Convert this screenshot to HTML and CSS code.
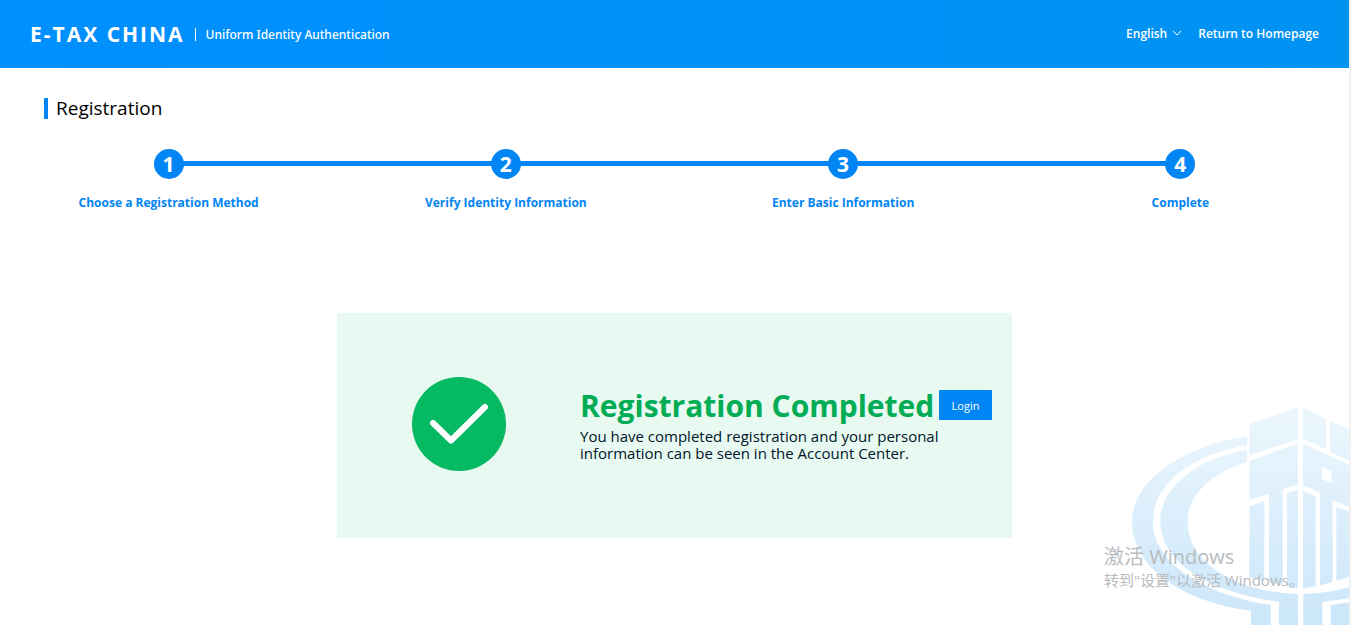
FILE: index.html
```html
<!DOCTYPE html>
<html lang="en">
<head>
<meta charset="utf-8">
<title>E-Tax China - Registration</title>
<link rel="stylesheet" href="styles.css">
</head>
<body>
<header class="header">
  <div class="brand">
    <span class="brand-name">E-TAX CHINA</span>
    <span class="brand-sub">Uniform Identity Authentication</span>
  </div>
  <nav class="nav">
    <button class="lang" type="button">English
      <svg class="chevron" viewBox="0 0 10 6" aria-hidden="true"><path d="M1 1l4 4 4-4"/></svg>
    </button>
    <a class="home" href="#">Return to Homepage</a>
  </nav>
</header>
<main class="main">
  <h1 class="title">Registration</h1>
  <ol class="steps">
    <li class="step"><span class="dot">1</span><span class="label">Choose a Registration Method</span></li>
    <li class="step"><span class="dot">2</span><span class="label">Verify Identity Information</span></li>
    <li class="step"><span class="dot">3</span><span class="label">Enter Basic Information</span></li>
    <li class="step"><span class="dot">4</span><span class="label">Complete</span></li>
  </ol>
  <section class="panel">
    <svg class="check" viewBox="0 0 94 94" aria-hidden="true"><circle cx="47" cy="47" r="47"/><path d="M21 46L39 63.500L73 30"/></svg>
    <div class="message">
      <div class="done-row">
        <h2 class="done">Registration Completed</h2>
        <button class="login" type="button">Login</button>
      </div>
      <p class="text">You have completed registration and your personal information can be seen in the Account Center.</p>
    </div>
  </section>
</main>
<svg class="emblem" viewBox="0 0 777 705" aria-hidden="true">
  <defs>
    <linearGradient id="sky" gradientUnits="userSpaceOnUse" x1="0" y1="50" x2="0" y2="705">
      <stop offset="0" stop-color="#edf7fd"/><stop offset="1" stop-color="#cbe6fa"/>
    </linearGradient>
  </defs>
  <g fill="url(#sky)">
    <path d="M471 138C270 172 126 274 126 395C126 530 275 635 483 662V705H542V645C335 613 189 515 189 395C189 282 300 196 471 165Z"/>
    <path d="M471 180C317 207 211 292 211 395C211 510 345 605 567 635V705H624V612C430 605 293 515 293 395C293 316 362 249 471 215Z"/>
    <path d="M640 612C690 611 735 604 777 592V625L697 636V705H640Z"/>
    <path d="M722 645L777 637V705H722Z"/>
    <path d="M478 102L624 52V147L478 196Z"/>
    <path d="M639 52L708 86V178L639 146Z"/>
    <path d="M720 92L777 116V212L720 185Z"/>
    <path d="M478 213L624 160V283L578 298V585L537 577V311L478 330Z"/>
    <path d="M478 349L523 332V573L478 561Z"/>
    <path d="M591 308L624 299V595L591 589Z"/>
    <path fill-rule="evenodd" d="M639 160L777 225V350L728 330V576L690 586V308L639 285ZM696 230V267L725 279V243Z"/>
    <path d="M639 302L677 318V588L639 596Z"/>
    <path d="M739 352L777 364V560L739 572Z"/>
  </g>
</svg>
<aside class="activate" lang="zh-CN">
  <p class="activate-title">激活 Windows</p>
  <p class="activate-text">转到"设置"以激活 Windows。</p>
</aside>
</body>
</html>
```
FILE: styles.css
```css
* { box-sizing: border-box; }

body {
  margin: 0;
  min-height: 100vh;
  position: relative;
  overflow-x: hidden;
  border-right: 2px solid #f1f1f1;
  background: #fff;
  color: #000;
  font-family: "Open Sans", "Noto Sans", sans-serif;
}

h1, h2, p, ol { margin: 0; padding: 0; }
button { font-family: inherit; cursor: pointer; }

.header {
  display: flex;
  align-items: center;
  justify-content: space-between;
  height: 68px;
  padding: 0 30px;
  background: linear-gradient(90deg, #0090ff, #0093f2);
  color: #fff;
}

.brand, .nav { display: flex; align-items: center; }
.brand-name {
  font-size: 21px;
  font-weight: 700;
  letter-spacing: 2px;
}
.brand-sub {
  margin-left: 10px;
  padding-left: 10px;
  border-left: 1px solid #fff;
  font-family: "Noto Sans", "Open Sans", sans-serif;
  font-size: 12px;
  font-weight: 500;
  line-height: 13px;
}
.nav {
  gap: 16px;
  padding-bottom: 2px;
  font-size: 12px;
  font-weight: 600;
}
.lang {
  display: flex;
  align-items: center;
  gap: 5px;
  padding: 0;
  border: 0;
  background: none;
  color: inherit;
  font-size: 12px;
  font-weight: 600;
}
.chevron {
  width: 10px;
  height: 6px;
  fill: none;
  stroke: #fff;
}
.home { color: inherit; text-decoration: none; }

.title {
  margin: 30px 0 0 44px;
  padding-left: 8px;
  border-left: 4px solid #0085f5;
  border-radius: 1px;
  font-size: 19px;
  font-weight: 400;
  line-height: 21px;
}

.steps {
  display: grid;
  grid-template-columns: repeat(4, 1fr);
  margin-top: 30px;
  list-style: none;
  color: #0085f5;
}
.step {
  position: relative;
  display: flex;
  flex-direction: column;
  align-items: center;
  gap: 15px;
}
.step + .step::before {
  content: "";
  position: absolute;
  top: 12px;
  right: 50%;
  width: 100%;
  height: 5px;
  background: #0085f5;
}
.dot {
  position: relative;
  z-index: 1;
  width: 30px;
  height: 30px;
  border-radius: 50%;
  background: #0085f5;
  color: #fff;
  font-size: 21px;
  font-weight: 700;
  line-height: 30px;
  text-align: center;
}
.label {
  font-size: 12px;
  font-weight: 700;
  line-height: 18px;
}

.panel {
  position: relative;
  z-index: 1;
  display: flex;
  align-items: flex-start;
  width: 50%;
  min-width: 675px;
  min-height: 225px;
  margin: 101px auto 0;
  padding: 64px 20px 64px 75px;
  background: #e7f9f1;
}
.check { flex: none; width: 94px; height: 94px; }
.check circle { fill: #05ba62; }
.check path {
  fill: none;
  stroke: #fff;
  stroke-width: 6;
  stroke-linecap: round;
  stroke-linejoin: round;
}
.message { flex: 1; margin: 7px 0 0 74px; }
.done-row {
  display: flex;
  align-items: center;
  justify-content: space-between;
}
.done {
  color: #00ad55;
  font-size: 30px;
  font-weight: 700;
  line-height: 44px;
  white-space: nowrap;
}
.text {
  max-width: 380px;
  color: #001529;
  font-size: 15px;
  line-height: 17px;
}
.login {
  flex: none;
  width: 53px;
  height: 30px;
  margin-bottom: 2px;
  padding: 0;
  border: 0;
  border-radius: 1px;
  background: #0085f5;
  color: #fff;
  font-size: 11px;
}

.emblem {
  position: absolute;
  right: 0;
  bottom: 0;
  width: 259px;
  height: 235px;
}
.activate {
  position: absolute;
  z-index: 2;
  right: 48px;
  bottom: 34px;
  width: 197px;
  color: #b8bbbe;
  font-family: "Open Sans", "Noto Sans CJK SC", sans-serif;
  white-space: nowrap;
}
.activate-title { font-size: 20px; line-height: 24px; }
.activate-text { font-size: 15px; line-height: 22px; }
```
